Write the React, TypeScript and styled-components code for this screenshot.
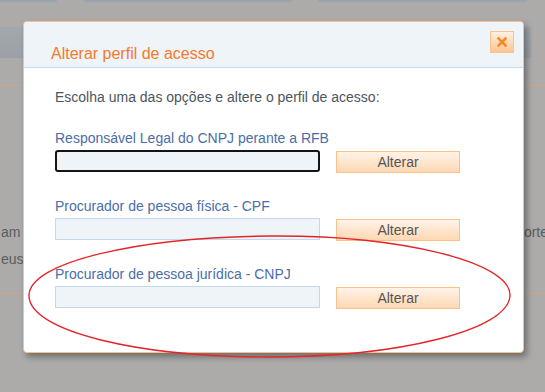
import styled, { createGlobalStyle } from "styled-components";

const GlobalStyle = createGlobalStyle`
  html, body {
    margin: 0;
    padding: 0;
    background: #acabaa;
  }
  body {
    font-family: "Liberation Sans", Arial, sans-serif;
  }
`;

const options = [
  { label: "Responsável Legal do CNPJ perante a RFB", focused: true },
  { label: "Procurador de pessoa física - CPF", focused: false },
  { label: "Procurador de pessoa jurídica - CNPJ", focused: false },
];

const App = () => {
  return (
    <>
      <GlobalStyle />
      <Page>
        <TopStrip>
          <StripPart $width={57} />
          <StripPart $width={208} $left={27} />
          <StripPart $width={209} $left={26} />
        </TopStrip>
        <Toolbar />
        <Rule $top={27} />
        <PageText $top={138}>
          <span>am</span>
          <span>orte</span>
        </PageText>
        <PageText $top={11}>
          <span>eus</span>
        </PageText>
        <Rule $top={26} />

        <Dialog>
          <DialogHeader>
            <DialogTitle>Alterar perfil de acesso</DialogTitle>
            <CloseButton aria-label="Fechar">
              <svg width="10" height="10" viewBox="0 0 10 10">
                <path
                  d="M1.5 1.5 L8.5 8.5 M8.5 1.5 L1.5 8.5"
                  stroke="#f7892a"
                  strokeWidth="2.6"
                  strokeLinecap="square"
                />
              </svg>
            </CloseButton>
          </DialogHeader>
          <DialogBody>
            <Intro>Escolha uma das opções e altere o perfil de acesso:</Intro>
            {options.map((opt) => (
              <Option key={opt.label}>
                <OptionLabel>{opt.label}</OptionLabel>
                <OptionRow>
                  <Field $focused={opt.focused} />
                  <AlterButton>Alterar</AlterButton>
                </OptionRow>
              </Option>
            ))}
          </DialogBody>
        </Dialog>

        <Annotation width="545" height="392" viewBox="0 0 545 392">
          <path
            d="M270 236 C 400 235, 512 262, 510 296 C 508 330, 400 357, 268 357 C 140 357, 30 332, 29 296 C 28 262, 140 237, 270 236 Z"
            fill="none"
            stroke="#e3262b"
            strokeWidth="1.4"
          />
        </Annotation>
      </Page>
    </>
  );
};

export default App;

const Page = styled.div`
  position: relative;
  width: 545px;
  height: 392px;
  overflow: hidden;
  background: #acabaa;
  display: flex;
  flex-direction: column;
`;

const TopStrip = styled.div`
  display: flex;
  height: 2px;
`;

const StripPart = styled.div<{ $width: number; $left?: number }>`
  width: ${({ $width }) => $width}px;
  margin-left: ${({ $left }) => $left ?? 0}px;
  background: #9aa3ae;
`;

const Toolbar = styled.div`
  margin-top: 25px;
  width: 531px;
  height: 31px;
  background: linear-gradient(#a3a8ad, #9ba1a7);
`;

const Rule = styled.div<{ $top: number }>`
  margin-top: ${({ $top }) => $top}px;
  height: 1px;
  background: #c6a98c;
`;

const PageText = styled.div<{ $top: number }>`
  margin-top: ${({ $top }) => $top}px;
  display: flex;
  justify-content: space-between;
  font-size: 14px;
  line-height: 16px;
  color: #5b5d60;
  padding-left: 1px;
  margin-right: -3px;
`;

const Dialog = styled.div`
  position: absolute;
  left: 23px;
  top: 21px;
  width: 499px;
  height: 330px;
  background: #ffffff;
  border: 1px solid #f7bf8c;
  border-radius: 4px;
  box-shadow: 3px 4px 6px rgba(0, 0, 0, 0.35);
  overflow: hidden;
`;

const DialogHeader = styled.div`
  position: relative;
  height: 46px;
  background: #eff4f8;
  border-bottom: 1px solid #c6dcee;
  padding: 23px 0 0 27px;
  box-sizing: border-box;
`;

const DialogTitle = styled.div`
  font-size: 16px;
  line-height: 18px;
  color: #f47a2c;
`;

const CloseButton = styled.button`
  position: absolute;
  top: 9px;
  right: 9px;
  width: 24px;
  height: 22px;
  padding: 0;
  display: flex;
  align-items: center;
  justify-content: center;
  border: 1px solid #fbc48f;
  background: linear-gradient(#fff1e2, #ffc590);
  cursor: pointer;
`;

const DialogBody = styled.div`
  padding: 21px 0 0 31px;
  display: flex;
  flex-direction: column;
  gap: 25px;
`;

const Intro = styled.div`
  font-size: 14px;
  line-height: 16px;
  color: #4d5561;
`;

const Option = styled.div`
  display: flex;
  flex-direction: column;
  gap: 4px;
`;

const OptionLabel = styled.div`
  font-size: 14px;
  line-height: 16px;
  color: #4a6ea8;
`;

const OptionRow = styled.div`
  display: flex;
  align-items: flex-start;
  gap: 16px;
`;

const Field = styled.div<{ $focused: boolean }>`
  width: 265px;
  height: 22px;
  box-sizing: border-box;
  background: #eff4f9;
  border: ${({ $focused }) =>
    $focused ? "2px solid #141414" : "1px solid #c3d9eb"};
  border-radius: ${({ $focused }) => ($focused ? "3px" : "0")};
`;

const AlterButton = styled.button`
  margin-top: 1px;
  width: 124px;
  height: 22px;
  padding: 0;
  box-sizing: border-box;
  border: 1px solid #fbbf88;
  background: linear-gradient(#fff3e8, #fed8b3);
  font-family: "Liberation Sans", Arial, sans-serif;
  font-size: 14px;
  line-height: 16px;
  color: #555555;
  cursor: pointer;
`;

const Annotation = styled.svg`
  position: absolute;
  left: 0;
  top: 0;
  pointer-events: none;
`;
